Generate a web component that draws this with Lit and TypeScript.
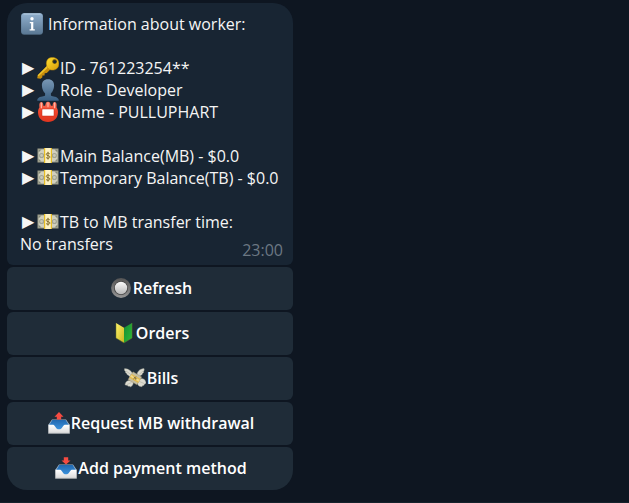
import { LitElement, html, css, svg, type TemplateResult } from "lit";
import { customElement, property } from "lit/decorators.js";

const banknote = svg`
  <rect x="0.5" y="3.500" width="21" height="14" fill="#9b9c88"/>
  <rect x="1.5" y="4.500" width="19" height="12" fill="#d0cfbd"/>
  <path d="M1.5 4.500h3l-3 3zM20.5 4.500h-3l3 3zM1.5 16.500v-3l3 3zM20.5 16.500v-3l-3 3z" fill="#85897a"/>
  <circle cx="4.600" cy="10.500" r="2.600" fill="#a2a492"/><circle cx="4.600" cy="10.500" r="1.400" fill="#c9c9b8"/>
  <circle cx="17.400" cy="10.500" r="2.600" fill="#a2a492"/><circle cx="17.400" cy="10.500" r="1.400" fill="#c9c9b8"/>
  <rect x="7" y="3" width="8" height="15" fill="#e6bd24"/>
  <rect x="8.2" y="3" width="5.600" height="15" fill="#fdf2c4"/>
  <path d="M12.800 8.900c-.5-.6-1.100-.8-1.800-.8-1 0-1.800.4-1.800 1.200 0 1.800 3.700.9 3.700 2.600 0 .9-.8 1.400-1.900 1.400-.8 0-1.500-.3-2-.9M11 6.800v7.800" fill="none" stroke="#7a6422" stroke-width=".9"/>`;

const tray = svg`
  <defs><linearGradient id="a" x2="0" y2="1"><stop stop-color="#2168b0"/><stop offset="1" stop-color="#429ce7"/></linearGradient>
  <linearGradient id="b" x2="0" y2="1"><stop stop-color="#fff"/><stop offset="1" stop-color="#d9d9d9"/></linearGradient></defs>
  <path d="M4 7.600h14l3.800 5.400H.2z" fill="#9fb4c8"/><path d="M4.300 8h13.400l3.300 5.500-4 6H5l-4-6z" fill="url(#a)"/>
  <path d="M.3 12.700h4.900c1.700 0 2.500 4.600 5.800 4.600s4.100-4.600 5.800-4.600h4.900v8.900H.3z" fill="url(#b)"/>
  <path d="M.3 21.300h21.400" stroke="#a5a9ac" stroke-width=".6"/>`;

const icons: Record<string, TemplateResult> = {
  info: svg`
    <defs><linearGradient id="a" x2="0" y2="1"><stop stop-color="#91b0ce"/><stop offset="1" stop-color="#5a7894"/></linearGradient></defs>
    <rect x="0.2" y="0.2" width="21.600" height="21.600" rx="3" fill="#4f6b84"/>
    <rect x="0.2" y="0.2" width="21.600" height="20.800" rx="3" fill="url(#a)"/>
    <path d="M2.500 1h17" stroke="#b8cee1" stroke-width="1"/>
    <circle cx="11" cy="5.800" r="1.700" fill="#fff"/>
    <path d="M8.800 9h3.500v7.200h1.500v1.300H8.600v-1.300h1.500v-5.900H8.800z" fill="#fff"/>`,
  key: svg`
    <defs><linearGradient id="a" x2="1" y2="1"><stop stop-color="#ffe030"/><stop offset="1" stop-color="#d99b08"/></linearGradient></defs>
    <path d="M10.500 8.500L.7 18.300.2 21.200l3.400.6 1.800-1.500-.1-1.900 2.200.1.200-2.300 2.100-.1 4-4z" fill="#c98f0d"/>
    <path d="M10.400 8.400L.7 18.200l.8 1.100L12 9.800z" fill="#edc52c"/>
    <path d="M11 2C13.500-.2 18 .1 20.200 2.200c2.200 2.400 2.200 6.700 0 9.100-2.300 2.300-6.700 2.400-9 .2C8.900 9.200 8.700 4.400 11 2z" fill="url(#a)" stroke="#b78208" stroke-width=".5"/>
    <circle cx="17.600" cy="4.500" r="2.300" fill="#634e0c"/><circle cx="17.800" cy="4.800" r="1.600" fill="#1c2731"/>`,
  person: svg`
    <defs><linearGradient id="a" x2="0" y2="1"><stop stop-color="#7897b4"/><stop offset="1" stop-color="#395f82"/></linearGradient></defs>
    <path d="M11 .3c-4 0-6.200 2.400-6.100 6.200.1 3.400 1.400 6.300 3.200 7.700v2.200C6.500 17.600 1.500 17.200.4 20.300L.2 21.800h21.600l-.2-1.500c-1.100-3.100-6.100-2.700-7.700-3.900v-2.200c1.800-1.400 3.100-4.300 3.200-7.700C17.200 2.700 15 .3 11 .3z" fill="url(#a)"/>`,
  badge: svg`
    <defs><linearGradient id="a" x2="0" y2="1"><stop stop-color="#ff7a62"/><stop offset=".45" stop-color="#f0452c"/><stop offset="1" stop-color="#e0351f"/></linearGradient></defs>
    <path d="M4.300 1c1.500 0 2.100 1.700 2.200 4.100l1.800-.5C8.500 2.200 9.300.8 11 .8s2.500 1.400 2.700 3.800l1.800.5c.1-2.400.7-4.100 2.200-4.100 1.900 0 2.200 3 1.800 5.300 1.100 1.600 1.500 3.100 1.500 5 0 5.900-4.100 9.700-10 9.700S1 17.200 1 11.300c0-1.900.4-3.400 1.500-5C2.100 4 2.400 1 4.300 1z" fill="url(#a)"/>
    <path d="M4.400 2.200v4.500M11 2.200v3.500M17.600 2.200v4.500" stroke="#ffb3a3" stroke-width="1.200" stroke-linecap="round"/>
    <rect x="5" y="8" width="12" height="7" rx=".8" fill="#fff" stroke="#c02c1a" stroke-width=".5"/>`,
  banknote,
  record: svg`
    <defs><linearGradient id="a" x2="0" y2="1"><stop stop-color="#555"/><stop offset="1" stop-color="#969696"/></linearGradient>
    <linearGradient id="b" x2="0" y2="1"><stop stop-color="#fafafa"/><stop offset="1" stop-color="#bababa"/></linearGradient></defs>
    <circle cx="11" cy="11" r="9.900" fill="url(#a)"/><circle cx="11" cy="11" r="7" fill="#454545"/>
    <circle cx="11" cy="11" r="6.200" fill="url(#b)"/>`,
  beginner: svg`
    <defs><linearGradient id="a" x2="1" y2="1"><stop stop-color="#fff36a"/><stop offset="1" stop-color="#cab620"/></linearGradient>
    <linearGradient id="b" x2="1" y2="1"><stop stop-color="#168b35"/><stop offset="1" stop-color="#2bbd37"/></linearGradient></defs>
    <path d="M3 1l8 4.800v15L3 16z" fill="url(#a)"/><path d="M19 1l-8 4.800v15l8-4.800z" fill="url(#b)"/>
    <path d="M3 1v15l8 4.900 8-4.900V1" fill="none" stroke="#6f7e29" stroke-width=".5"/>`,
  wings: svg`
    <path d="M9.500 8.500C8 4.500 5 1.600.6 1.600c-.6 1.500 0 2.400.9 2.800-.2 1.200.4 1.900 1.300 2.100 0 1.100.8 1.700 1.700 1.700.3 1.300 2.500 1.800 4 1.500zM13 8.500c0-3.800 2.600-6.800 7-7 .5 1.300.2 2.100-.5 2.700.5 1.100-.2 1.900-1 2.100 0 1.300-.8 1.800-1.700 1.900-.5 1.100-2 1.300-3.800.3zM8.500 13.500c-3.700-.9-7 .6-7.500 3.900.6.900 1.500 1 2.200.6.300 1.200 1.100 1.500 2 1.100.5.900 1.500 1 2 .3 1.400-.5 2.300-3 2.300-4.900zM14 12.500c3.500-2.200 7.600-.5 8 3.200-.3 1-.9 1.300-1.600 1.200.1 1.200-.7 1.800-1.600 1.700-.3 1-1.300 1.300-2.100.8-2 .4-3.700-2.300-3.700-4.300z" fill="#dcdbd0" stroke="#9b9d90" stroke-width=".4"/>
    <path d="M2 4l5.500 4M19 4l-4.500 4M3 17.500l4.500-2M15.500 14.500l4.500 2" fill="none" stroke="#b4b5a8" stroke-width=".7"/>
    <path d="M9 4.800l8.800 5.200-5 7.800L4 12.600z" fill="#c5bea1" stroke="#8d8160" stroke-width=".4"/>
    <path d="M7.700 6.900l8.800 5.200-2.400 3.800-8.800-5.200z" fill="#e2ba4d"/><path d="M7.200 7.900l8.600 5.100-1.100 1.700-8.600-5.100z" fill="#f0d88b"/>
    <path d="M9.300 12l3-2.300M9.800 10l2.200 2M11.500 12.800l1.200-1.400" stroke="#75602c" stroke-width=".8"/>`,
  outbox: svg`${tray}<path d="M11 .1l4.500 4.600h-2.300v2.900H8.800V4.700H6.500z" fill="#f64b42"/>`,
  inbox: svg`${tray}<path d="M11 7.600L6.500 3.500h2.300V.3h4.400v3.200h2.300z" fill="#f64b42"/>`,
};

@customElement("emoji-icon")
export class EmojiIcon extends LitElement {
  @property() name = "info";
  static styles = css`
    :host { display: block; flex: none; width: 22px; height: 22px; }
    svg { display: block; width: 100%; height: 100%; }
  `;
  render() {
    return html`<svg viewBox="0 0 22 22" aria-hidden="true">${icons[this.name]}</svg>`;
  }
}

interface Row { icon: string; text: string; }

const groups: Row[][] = [
  [
    { icon: "key", text: "ID - 761223254**" },
    { icon: "person", text: "Role - Developer" },
    { icon: "badge", text: "Name - PULLUPHART" },
  ],
  [
    { icon: "banknote", text: "Main Balance(MB) - $0.0" },
    { icon: "banknote", text: "Temporary Balance(TB) - $0.0" },
  ],
  [{ icon: "banknote", text: "TB to MB transfer time:" }],
];

const actions: Row[] = [
  { icon: "record", text: "Refresh" },
  { icon: "beginner", text: "Orders" },
  { icon: "wings", text: "Bills" },
  { icon: "outbox", text: "Request MB withdrawal" },
  { icon: "inbox", text: "Add payment method" },
];

@customElement("app-root")
export class AppRoot extends LitElement {
  static styles = css`
    :host {
      display: block;
      box-sizing: border-box;
      min-height: 100vh;
      padding: 3px 7px 12px;
      border-bottom: 1px solid #15222c;
      background: #0e1621;
      color: #f5f5f5;
      font: 16px/22px "Open Sans", "Noto Sans", sans-serif;
    }
    .message {
      display: flex;
      flex-direction: column;
      gap: 2px;
      width: 286px;
      max-width: 100%;
    }
    .bubble {
      display: flex;
      flex-direction: column;
      gap: 22px;
      padding: 10px 10px 10px 13px;
      border-radius: 20px 20px 6px 6px;
      background: #182533;
    }
    .line { display: flex; gap: 1px; white-space: nowrap; }
    .title { gap: 5px; padding-left: 1px; }
    .marker {
      width: 14px;
      padding-left: 2px;
      font-family: "DejaVu Sans", sans-serif;
    }
    .footer { display: flex; justify-content: space-between; }
    .time { color: #6c7883; position: relative; top: 6px; }
    .action {
      display: flex;
      align-items: center;
      justify-content: center;
      gap: 1px;
      height: 43px;
      padding: 0 0 2px 2px;
      border: 0;
      border-radius: 6px;
      background: #1f2c38;
      color: #fff;
      font: inherit;
      font-weight: 600;
      cursor: pointer;
    }
    .action:last-child { border-radius: 6px 6px 20px 20px; }
    .action:hover { background: #263542; }
  `;

  private renderRow(row: Row) {
    return html`<div class="line">
      <span class="marker">▶</span><emoji-icon name=${row.icon}></emoji-icon><span>${row.text}</span>
    </div>`;
  }

  render() {
    return html`<main class="message">
      <section class="bubble">
        <div class="line title"><emoji-icon name="info"></emoji-icon><span>Information about worker:</span></div>
        ${groups.map((rows, i) => html`<div>
          ${rows.map((row) => this.renderRow(row))}
          ${i === groups.length - 1
            ? html`<div class="footer"><span>No transfers</span><time class="time">23:00</time></div>`
            : ""}
        </div>`)}
      </section>
      ${actions.map((a) => html`<button class="action" type="button">
        <emoji-icon name=${a.icon}></emoji-icon><span>${a.text}</span>
      </button>`)}
    </main>`;
  }
}
